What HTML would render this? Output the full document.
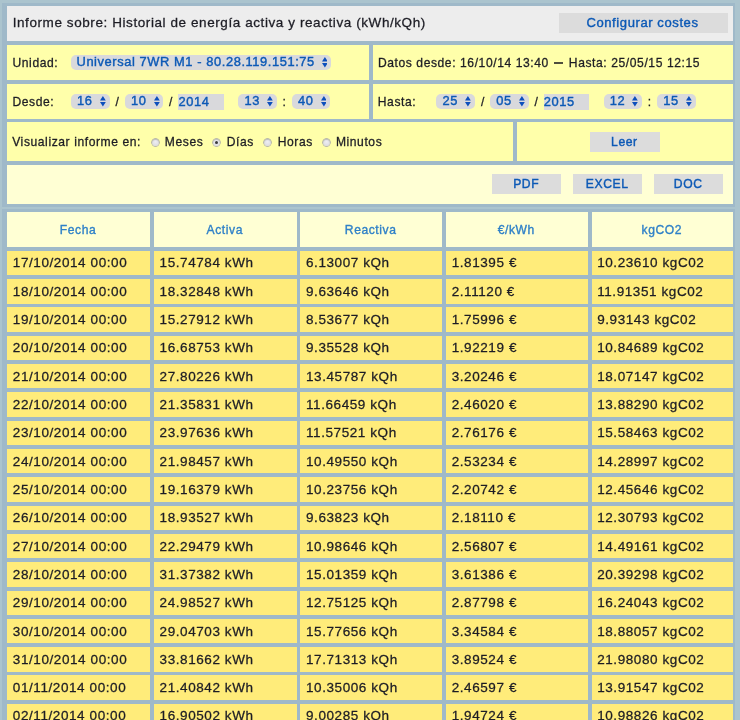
<!DOCTYPE html>
<html><head><meta charset="utf-8"><title>Informe</title>
<style>
html,body{margin:0;padding:0;}
body{width:740px;height:720px;overflow:hidden;position:relative;background:#abc4ce;font-family:"Liberation Sans",sans-serif;font-size:13px;letter-spacing:0.58px;color:#1d1d25;}
#w{position:absolute;left:0;top:0;width:740px;height:720px;overflow:hidden;will-change:transform;-webkit-text-stroke-width:0.28px;}
.b{position:absolute;}
.t{position:absolute;height:20px;line-height:20px;white-space:nowrap;}
.c{text-align:center;}
</style></head><body><div id="w">
<div class="b" style="left:2.20px;top:2.70px;width:733.10px;height:204.60px;background:#9fb9c9;"></div>
<div class="b" style="left:2.20px;top:208.70px;width:733.10px;height:511.30px;background:#9fb9c9;"></div>
<div class="b" style="left:7.15px;top:5.85px;width:726.05px;height:35.15px;background:#ededed;"></div>
<div class="t" style="left:12.70px;top:13.37px;font-size:13.5px;">Informe sobre: Historial de energía activa y reactiva (kWh/kQh)</div>
<div class="b" style="left:558.50px;top:12.80px;width:169.00px;height:19.80px;background:#dcdcdc;"></div>
<div class="t c" style="left:558.00px;width:169.00px;top:12.63px;font-size:13.05px;color:#0c59b6;-webkit-text-stroke-width:0.4px;">Configurar costes</div>
<div class="b" style="left:7.15px;top:44.75px;width:361.75px;height:35.20px;background:#ffffaa;"></div>
<div class="b" style="left:372.80px;top:44.75px;width:360.40px;height:35.20px;background:#ffffaa;"></div>
<div class="t" style="left:12.50px;top:53.46px;font-size:12.1px;">Unidad:</div>
<div class="b" style="left:71.00px;top:55.10px;width:260.40px;height:14.70px;background:#d9d9dc;border-radius:5px;"></div>
<div class="t" style="left:76.50px;top:51.89px;font-size:12.88px;color:#0c59b6;-webkit-text-stroke-width:0.4px;">Universal 7WR M1 - 80.28.119.151:75</div>
<svg class="b" style="left:321.60px;top:57.30px" width="5.8" height="10.4" viewBox="0 0 5.8 10.4"><path d="M2.9 0 L5.8 4.4 L0 4.4 Z M2.9 10.4 L5.8 6 L0 6 Z" fill="#0d4fbc"/></svg>
<div class="t" style="left:377.90px;top:53.46px;font-size:12.1px;">Datos desde: 16/10/14 13:40 <span style="display:inline-block;width:9px;height:1.4px;margin:0 1.8px 0 1.3px;vertical-align:3.9px;background:rgba(34,34,34,.8)"></span> Hasta: 25/05/15 12:15</div>
<div class="b" style="left:7.15px;top:83.90px;width:361.75px;height:35.05px;background:#ffffaa;"></div>
<div class="b" style="left:372.80px;top:83.90px;width:360.40px;height:35.05px;background:#ffffaa;"></div>
<div class="t" style="left:12.50px;top:92.16px;font-size:12.1px;">Desde:</div>
<div class="b" style="left:71.00px;top:94.00px;width:38.60px;height:14.80px;background:#d9d9dc;border-radius:5px;"></div>
<div class="t" style="left:77.10px;top:91.49px;font-size:12.88px;color:#0c59b6;-webkit-text-stroke-width:0.4px;">16</div>
<svg class="b" style="left:99.90px;top:96.35px" width="5.8" height="10.4" viewBox="0 0 5.8 10.4"><path d="M2.9 0 L5.8 4.4 L0 4.4 Z M2.9 10.4 L5.8 6 L0 6 Z" fill="#0d4fbc"/></svg>
<div class="t" style="left:115.60px;top:92.16px;font-size:12.1px;">/</div>
<div class="b" style="left:124.90px;top:94.00px;width:38.60px;height:14.80px;background:#d9d9dc;border-radius:5px;"></div>
<div class="t" style="left:131.00px;top:91.49px;font-size:12.88px;color:#0c59b6;-webkit-text-stroke-width:0.4px;">10</div>
<svg class="b" style="left:153.80px;top:96.35px" width="5.8" height="10.4" viewBox="0 0 5.8 10.4"><path d="M2.9 0 L5.8 4.4 L0 4.4 Z M2.9 10.4 L5.8 6 L0 6 Z" fill="#0d4fbc"/></svg>
<div class="t" style="left:169.10px;top:92.16px;font-size:12.1px;">/</div>
<div class="b" style="left:178.40px;top:94.00px;width:45.60px;height:15.70px;background:#d9d9dc;"></div>
<div class="t" style="left:178.50px;top:91.99px;font-size:12.88px;color:#0c59b6;-webkit-text-stroke-width:0.4px;">2014</div>
<div class="b" style="left:238.40px;top:94.00px;width:38.40px;height:14.80px;background:#d9d9dc;border-radius:5px;"></div>
<div class="t" style="left:244.50px;top:91.49px;font-size:12.88px;color:#0c59b6;-webkit-text-stroke-width:0.4px;">13</div>
<svg class="b" style="left:267.10px;top:96.35px" width="5.8" height="10.4" viewBox="0 0 5.8 10.4"><path d="M2.9 0 L5.8 4.4 L0 4.4 Z M2.9 10.4 L5.8 6 L0 6 Z" fill="#0d4fbc"/></svg>
<div class="t" style="left:282.50px;top:92.16px;font-size:12.1px;">:</div>
<div class="b" style="left:291.90px;top:94.00px;width:38.40px;height:14.80px;background:#d9d9dc;border-radius:5px;"></div>
<div class="t" style="left:298.00px;top:91.49px;font-size:12.88px;color:#0c59b6;-webkit-text-stroke-width:0.4px;">40</div>
<svg class="b" style="left:320.60px;top:96.35px" width="5.8" height="10.4" viewBox="0 0 5.8 10.4"><path d="M2.9 0 L5.8 4.4 L0 4.4 Z M2.9 10.4 L5.8 6 L0 6 Z" fill="#0d4fbc"/></svg>
<div class="t" style="left:377.80px;top:92.16px;font-size:12.1px;">Hasta:</div>
<div class="b" style="left:436.30px;top:94.00px;width:38.60px;height:14.80px;background:#d9d9dc;border-radius:5px;"></div>
<div class="t" style="left:442.40px;top:91.49px;font-size:12.88px;color:#0c59b6;-webkit-text-stroke-width:0.4px;">25</div>
<svg class="b" style="left:465.20px;top:96.35px" width="5.8" height="10.4" viewBox="0 0 5.8 10.4"><path d="M2.9 0 L5.8 4.4 L0 4.4 Z M2.9 10.4 L5.8 6 L0 6 Z" fill="#0d4fbc"/></svg>
<div class="t" style="left:480.90px;top:92.16px;font-size:12.1px;">/</div>
<div class="b" style="left:490.20px;top:94.00px;width:38.60px;height:14.80px;background:#d9d9dc;border-radius:5px;"></div>
<div class="t" style="left:496.30px;top:91.49px;font-size:12.88px;color:#0c59b6;-webkit-text-stroke-width:0.4px;">05</div>
<svg class="b" style="left:519.10px;top:96.35px" width="5.8" height="10.4" viewBox="0 0 5.8 10.4"><path d="M2.9 0 L5.8 4.4 L0 4.4 Z M2.9 10.4 L5.8 6 L0 6 Z" fill="#0d4fbc"/></svg>
<div class="t" style="left:534.40px;top:92.16px;font-size:12.1px;">/</div>
<div class="b" style="left:543.70px;top:94.00px;width:45.60px;height:15.70px;background:#d9d9dc;"></div>
<div class="t" style="left:543.80px;top:91.99px;font-size:12.88px;color:#0c59b6;-webkit-text-stroke-width:0.4px;">2015</div>
<div class="b" style="left:603.70px;top:94.00px;width:38.40px;height:14.80px;background:#d9d9dc;border-radius:5px;"></div>
<div class="t" style="left:609.80px;top:91.49px;font-size:12.88px;color:#0c59b6;-webkit-text-stroke-width:0.4px;">12</div>
<svg class="b" style="left:632.40px;top:96.35px" width="5.8" height="10.4" viewBox="0 0 5.8 10.4"><path d="M2.9 0 L5.8 4.4 L0 4.4 Z M2.9 10.4 L5.8 6 L0 6 Z" fill="#0d4fbc"/></svg>
<div class="t" style="left:647.80px;top:92.16px;font-size:12.1px;">:</div>
<div class="b" style="left:657.20px;top:94.00px;width:38.40px;height:14.80px;background:#d9d9dc;border-radius:5px;"></div>
<div class="t" style="left:663.30px;top:91.49px;font-size:12.88px;color:#0c59b6;-webkit-text-stroke-width:0.4px;">15</div>
<svg class="b" style="left:685.90px;top:96.35px" width="5.8" height="10.4" viewBox="0 0 5.8 10.4"><path d="M2.9 0 L5.8 4.4 L0 4.4 Z M2.9 10.4 L5.8 6 L0 6 Z" fill="#0d4fbc"/></svg>
<div class="b" style="left:7.15px;top:121.95px;width:506.10px;height:39.05px;background:#ffffaa;"></div>
<div class="b" style="left:517.15px;top:121.95px;width:216.05px;height:39.05px;background:#ffffaa;"></div>
<div class="t" style="left:12.20px;top:131.66px;font-size:12.1px;">Visualizar informe en:</div>
<div class="b" style="left:151.50px;top:138.90px;width:7px;height:7px;border-radius:50%;background:radial-gradient(circle at 50% 40%,#efeff2,#d6d6dc);box-shadow:0 0 0 0.7px #a2a2a8, inset 0 0.8px 1px rgba(0,0,0,.22);"></div>
<div class="t" style="left:164.80px;top:131.66px;font-size:12.1px;">Meses</div>
<div class="b" style="left:213.10px;top:138.90px;width:7px;height:7px;border-radius:50%;background:radial-gradient(circle at 50% 40%,#efeff2,#d6d6dc);box-shadow:0 0 0 0.7px #a2a2a8, inset 0 0.8px 1px rgba(0,0,0,.22);"></div>
<div class="b" style="left:215.00px;top:140.80px;width:3.2px;height:3.2px;border-radius:50%;background:#3a3a3a;"></div>
<div class="t" style="left:226.70px;top:131.66px;font-size:12.1px;">Días</div>
<div class="b" style="left:263.80px;top:138.90px;width:7px;height:7px;border-radius:50%;background:radial-gradient(circle at 50% 40%,#efeff2,#d6d6dc);box-shadow:0 0 0 0.7px #a2a2a8, inset 0 0.8px 1px rgba(0,0,0,.22);"></div>
<div class="t" style="left:277.70px;top:131.66px;font-size:12.1px;">Horas</div>
<div class="b" style="left:322.50px;top:138.90px;width:7px;height:7px;border-radius:50%;background:radial-gradient(circle at 50% 40%,#efeff2,#d6d6dc);box-shadow:0 0 0 0.7px #a2a2a8, inset 0 0.8px 1px rgba(0,0,0,.22);"></div>
<div class="t" style="left:335.90px;top:131.66px;font-size:12.1px;">Minutos</div>
<div class="b" style="left:590.00px;top:132.20px;width:69.80px;height:19.60px;background:#dcdcdc;"></div>
<div class="t c" style="left:589.50px;width:69.80px;top:132.04px;font-size:12.15px;color:#0c59b6;-webkit-text-stroke-width:0.4px;">Leer</div>
<div class="b" style="left:7.15px;top:164.90px;width:726.05px;height:39.05px;background:#ffffd4;"></div>
<div class="b" style="left:492.20px;top:174.00px;width:69.00px;height:19.80px;background:#dcdcdc;"></div>
<div class="t c" style="left:491.70px;width:69.00px;top:174.34px;font-size:12.15px;color:#0c59b6;-webkit-text-stroke-width:0.4px;">PDF</div>
<div class="b" style="left:573.10px;top:174.00px;width:69.10px;height:19.80px;background:#dcdcdc;"></div>
<div class="t c" style="left:572.60px;width:69.10px;top:174.34px;font-size:12.15px;color:#0c59b6;-webkit-text-stroke-width:0.4px;">EXCEL</div>
<div class="b" style="left:654.10px;top:174.00px;width:69.10px;height:19.80px;background:#dcdcdc;"></div>
<div class="t c" style="left:653.60px;width:69.10px;top:174.34px;font-size:12.15px;color:#0c59b6;-webkit-text-stroke-width:0.4px;">DOC</div>
<div class="b" style="left:7.15px;top:211.70px;width:142.80px;height:35.10px;background:#ffffd4;"></div>
<div class="t c" style="left:6.65px;width:142.80px;top:220.16px;font-size:12.1px;color:#2f80c8;-webkit-text-stroke-width:0.35px;">Fecha</div>
<div class="b" style="left:153.90px;top:211.70px;width:142.80px;height:35.10px;background:#ffffd4;"></div>
<div class="t c" style="left:153.40px;width:142.80px;top:220.16px;font-size:12.1px;color:#2f80c8;-webkit-text-stroke-width:0.35px;">Activa</div>
<div class="b" style="left:300.30px;top:211.70px;width:141.75px;height:35.10px;background:#ffffd4;"></div>
<div class="t c" style="left:299.80px;width:141.75px;top:220.16px;font-size:12.1px;color:#2f80c8;-webkit-text-stroke-width:0.35px;">Reactiva</div>
<div class="b" style="left:446.00px;top:211.70px;width:141.60px;height:35.10px;background:#ffffd4;"></div>
<div class="t c" style="left:445.50px;width:141.60px;top:220.16px;font-size:12.1px;color:#2f80c8;-webkit-text-stroke-width:0.35px;">€/kWh</div>
<div class="b" style="left:591.50px;top:211.70px;width:141.70px;height:35.10px;background:#ffffd4;"></div>
<div class="t c" style="left:591.00px;width:141.70px;top:220.16px;font-size:12.1px;color:#2f80c8;-webkit-text-stroke-width:0.35px;">kgCO2</div>
<div class="b" style="left:7.15px;top:250.80px;width:142.80px;height:24.40px;background:#ffec7a;"></div>
<div class="t" style="left:12.85px;top:253.47px;font-size:13.5px;">17/10/2014 00:00</div>
<div class="b" style="left:153.90px;top:250.80px;width:142.80px;height:24.40px;background:#ffec7a;"></div>
<div class="t" style="left:159.60px;top:253.47px;font-size:13.5px;">15.74784 kWh</div>
<div class="b" style="left:300.30px;top:250.80px;width:141.75px;height:24.40px;background:#ffec7a;"></div>
<div class="t" style="left:306.00px;top:253.47px;font-size:13.5px;">6.13007 kQh</div>
<div class="b" style="left:446.00px;top:250.80px;width:141.60px;height:24.40px;background:#ffec7a;"></div>
<div class="t" style="left:451.70px;top:253.47px;font-size:13.5px;">1.81395 €</div>
<div class="b" style="left:591.50px;top:250.80px;width:141.70px;height:24.40px;background:#ffec7a;"></div>
<div class="t" style="left:597.20px;top:253.47px;font-size:13.5px;">10.23610 kgC02</div>
<div class="b" style="left:7.15px;top:279.11px;width:142.80px;height:24.40px;background:#ffec7a;"></div>
<div class="t" style="left:12.85px;top:281.78px;font-size:13.5px;">18/10/2014 00:00</div>
<div class="b" style="left:153.90px;top:279.11px;width:142.80px;height:24.40px;background:#ffec7a;"></div>
<div class="t" style="left:159.60px;top:281.78px;font-size:13.5px;">18.32848 kWh</div>
<div class="b" style="left:300.30px;top:279.11px;width:141.75px;height:24.40px;background:#ffec7a;"></div>
<div class="t" style="left:306.00px;top:281.78px;font-size:13.5px;">9.63646 kQh</div>
<div class="b" style="left:446.00px;top:279.11px;width:141.60px;height:24.40px;background:#ffec7a;"></div>
<div class="t" style="left:451.70px;top:281.78px;font-size:13.5px;">2.11120 €</div>
<div class="b" style="left:591.50px;top:279.11px;width:141.70px;height:24.40px;background:#ffec7a;"></div>
<div class="t" style="left:597.20px;top:281.78px;font-size:13.5px;">11.91351 kgC02</div>
<div class="b" style="left:7.15px;top:307.42px;width:142.80px;height:24.40px;background:#ffec7a;"></div>
<div class="t" style="left:12.85px;top:310.09px;font-size:13.5px;">19/10/2014 00:00</div>
<div class="b" style="left:153.90px;top:307.42px;width:142.80px;height:24.40px;background:#ffec7a;"></div>
<div class="t" style="left:159.60px;top:310.09px;font-size:13.5px;">15.27912 kWh</div>
<div class="b" style="left:300.30px;top:307.42px;width:141.75px;height:24.40px;background:#ffec7a;"></div>
<div class="t" style="left:306.00px;top:310.09px;font-size:13.5px;">8.53677 kQh</div>
<div class="b" style="left:446.00px;top:307.42px;width:141.60px;height:24.40px;background:#ffec7a;"></div>
<div class="t" style="left:451.70px;top:310.09px;font-size:13.5px;">1.75996 €</div>
<div class="b" style="left:591.50px;top:307.42px;width:141.70px;height:24.40px;background:#ffec7a;"></div>
<div class="t" style="left:597.20px;top:310.09px;font-size:13.5px;">9.93143 kgC02</div>
<div class="b" style="left:7.15px;top:335.73px;width:142.80px;height:24.40px;background:#ffec7a;"></div>
<div class="t" style="left:12.85px;top:338.40px;font-size:13.5px;">20/10/2014 00:00</div>
<div class="b" style="left:153.90px;top:335.73px;width:142.80px;height:24.40px;background:#ffec7a;"></div>
<div class="t" style="left:159.60px;top:338.40px;font-size:13.5px;">16.68753 kWh</div>
<div class="b" style="left:300.30px;top:335.73px;width:141.75px;height:24.40px;background:#ffec7a;"></div>
<div class="t" style="left:306.00px;top:338.40px;font-size:13.5px;">9.35528 kQh</div>
<div class="b" style="left:446.00px;top:335.73px;width:141.60px;height:24.40px;background:#ffec7a;"></div>
<div class="t" style="left:451.70px;top:338.40px;font-size:13.5px;">1.92219 €</div>
<div class="b" style="left:591.50px;top:335.73px;width:141.70px;height:24.40px;background:#ffec7a;"></div>
<div class="t" style="left:597.20px;top:338.40px;font-size:13.5px;">10.84689 kgC02</div>
<div class="b" style="left:7.15px;top:364.04px;width:142.80px;height:24.40px;background:#ffec7a;"></div>
<div class="t" style="left:12.85px;top:366.71px;font-size:13.5px;">21/10/2014 00:00</div>
<div class="b" style="left:153.90px;top:364.04px;width:142.80px;height:24.40px;background:#ffec7a;"></div>
<div class="t" style="left:159.60px;top:366.71px;font-size:13.5px;">27.80226 kWh</div>
<div class="b" style="left:300.30px;top:364.04px;width:141.75px;height:24.40px;background:#ffec7a;"></div>
<div class="t" style="left:306.00px;top:366.71px;font-size:13.5px;">13.45787 kQh</div>
<div class="b" style="left:446.00px;top:364.04px;width:141.60px;height:24.40px;background:#ffec7a;"></div>
<div class="t" style="left:451.70px;top:366.71px;font-size:13.5px;">3.20246 €</div>
<div class="b" style="left:591.50px;top:364.04px;width:141.70px;height:24.40px;background:#ffec7a;"></div>
<div class="t" style="left:597.20px;top:366.71px;font-size:13.5px;">18.07147 kgC02</div>
<div class="b" style="left:7.15px;top:392.35px;width:142.80px;height:24.40px;background:#ffec7a;"></div>
<div class="t" style="left:12.85px;top:395.02px;font-size:13.5px;">22/10/2014 00:00</div>
<div class="b" style="left:153.90px;top:392.35px;width:142.80px;height:24.40px;background:#ffec7a;"></div>
<div class="t" style="left:159.60px;top:395.02px;font-size:13.5px;">21.35831 kWh</div>
<div class="b" style="left:300.30px;top:392.35px;width:141.75px;height:24.40px;background:#ffec7a;"></div>
<div class="t" style="left:306.00px;top:395.02px;font-size:13.5px;">11.66459 kQh</div>
<div class="b" style="left:446.00px;top:392.35px;width:141.60px;height:24.40px;background:#ffec7a;"></div>
<div class="t" style="left:451.70px;top:395.02px;font-size:13.5px;">2.46020 €</div>
<div class="b" style="left:591.50px;top:392.35px;width:141.70px;height:24.40px;background:#ffec7a;"></div>
<div class="t" style="left:597.20px;top:395.02px;font-size:13.5px;">13.88290 kgC02</div>
<div class="b" style="left:7.15px;top:420.66px;width:142.80px;height:24.40px;background:#ffec7a;"></div>
<div class="t" style="left:12.85px;top:423.33px;font-size:13.5px;">23/10/2014 00:00</div>
<div class="b" style="left:153.90px;top:420.66px;width:142.80px;height:24.40px;background:#ffec7a;"></div>
<div class="t" style="left:159.60px;top:423.33px;font-size:13.5px;">23.97636 kWh</div>
<div class="b" style="left:300.30px;top:420.66px;width:141.75px;height:24.40px;background:#ffec7a;"></div>
<div class="t" style="left:306.00px;top:423.33px;font-size:13.5px;">11.57521 kQh</div>
<div class="b" style="left:446.00px;top:420.66px;width:141.60px;height:24.40px;background:#ffec7a;"></div>
<div class="t" style="left:451.70px;top:423.33px;font-size:13.5px;">2.76176 €</div>
<div class="b" style="left:591.50px;top:420.66px;width:141.70px;height:24.40px;background:#ffec7a;"></div>
<div class="t" style="left:597.20px;top:423.33px;font-size:13.5px;">15.58463 kgC02</div>
<div class="b" style="left:7.15px;top:448.97px;width:142.80px;height:24.40px;background:#ffec7a;"></div>
<div class="t" style="left:12.85px;top:451.64px;font-size:13.5px;">24/10/2014 00:00</div>
<div class="b" style="left:153.90px;top:448.97px;width:142.80px;height:24.40px;background:#ffec7a;"></div>
<div class="t" style="left:159.60px;top:451.64px;font-size:13.5px;">21.98457 kWh</div>
<div class="b" style="left:300.30px;top:448.97px;width:141.75px;height:24.40px;background:#ffec7a;"></div>
<div class="t" style="left:306.00px;top:451.64px;font-size:13.5px;">10.49550 kQh</div>
<div class="b" style="left:446.00px;top:448.97px;width:141.60px;height:24.40px;background:#ffec7a;"></div>
<div class="t" style="left:451.70px;top:451.64px;font-size:13.5px;">2.53234 €</div>
<div class="b" style="left:591.50px;top:448.97px;width:141.70px;height:24.40px;background:#ffec7a;"></div>
<div class="t" style="left:597.20px;top:451.64px;font-size:13.5px;">14.28997 kgC02</div>
<div class="b" style="left:7.15px;top:477.28px;width:142.80px;height:24.40px;background:#ffec7a;"></div>
<div class="t" style="left:12.85px;top:479.95px;font-size:13.5px;">25/10/2014 00:00</div>
<div class="b" style="left:153.90px;top:477.28px;width:142.80px;height:24.40px;background:#ffec7a;"></div>
<div class="t" style="left:159.60px;top:479.95px;font-size:13.5px;">19.16379 kWh</div>
<div class="b" style="left:300.30px;top:477.28px;width:141.75px;height:24.40px;background:#ffec7a;"></div>
<div class="t" style="left:306.00px;top:479.95px;font-size:13.5px;">10.23756 kQh</div>
<div class="b" style="left:446.00px;top:477.28px;width:141.60px;height:24.40px;background:#ffec7a;"></div>
<div class="t" style="left:451.70px;top:479.95px;font-size:13.5px;">2.20742 €</div>
<div class="b" style="left:591.50px;top:477.28px;width:141.70px;height:24.40px;background:#ffec7a;"></div>
<div class="t" style="left:597.20px;top:479.95px;font-size:13.5px;">12.45646 kgC02</div>
<div class="b" style="left:7.15px;top:505.59px;width:142.80px;height:24.40px;background:#ffec7a;"></div>
<div class="t" style="left:12.85px;top:508.26px;font-size:13.5px;">26/10/2014 00:00</div>
<div class="b" style="left:153.90px;top:505.59px;width:142.80px;height:24.40px;background:#ffec7a;"></div>
<div class="t" style="left:159.60px;top:508.26px;font-size:13.5px;">18.93527 kWh</div>
<div class="b" style="left:300.30px;top:505.59px;width:141.75px;height:24.40px;background:#ffec7a;"></div>
<div class="t" style="left:306.00px;top:508.26px;font-size:13.5px;">9.63823 kQh</div>
<div class="b" style="left:446.00px;top:505.59px;width:141.60px;height:24.40px;background:#ffec7a;"></div>
<div class="t" style="left:451.70px;top:508.26px;font-size:13.5px;">2.18110 €</div>
<div class="b" style="left:591.50px;top:505.59px;width:141.70px;height:24.40px;background:#ffec7a;"></div>
<div class="t" style="left:597.20px;top:508.26px;font-size:13.5px;">12.30793 kgC02</div>
<div class="b" style="left:7.15px;top:533.90px;width:142.80px;height:24.40px;background:#ffec7a;"></div>
<div class="t" style="left:12.85px;top:536.57px;font-size:13.5px;">27/10/2014 00:00</div>
<div class="b" style="left:153.90px;top:533.90px;width:142.80px;height:24.40px;background:#ffec7a;"></div>
<div class="t" style="left:159.60px;top:536.57px;font-size:13.5px;">22.29479 kWh</div>
<div class="b" style="left:300.30px;top:533.90px;width:141.75px;height:24.40px;background:#ffec7a;"></div>
<div class="t" style="left:306.00px;top:536.57px;font-size:13.5px;">10.98646 kQh</div>
<div class="b" style="left:446.00px;top:533.90px;width:141.60px;height:24.40px;background:#ffec7a;"></div>
<div class="t" style="left:451.70px;top:536.57px;font-size:13.5px;">2.56807 €</div>
<div class="b" style="left:591.50px;top:533.90px;width:141.70px;height:24.40px;background:#ffec7a;"></div>
<div class="t" style="left:597.20px;top:536.57px;font-size:13.5px;">14.49161 kgC02</div>
<div class="b" style="left:7.15px;top:562.21px;width:142.80px;height:24.40px;background:#ffec7a;"></div>
<div class="t" style="left:12.85px;top:564.88px;font-size:13.5px;">28/10/2014 00:00</div>
<div class="b" style="left:153.90px;top:562.21px;width:142.80px;height:24.40px;background:#ffec7a;"></div>
<div class="t" style="left:159.60px;top:564.88px;font-size:13.5px;">31.37382 kWh</div>
<div class="b" style="left:300.30px;top:562.21px;width:141.75px;height:24.40px;background:#ffec7a;"></div>
<div class="t" style="left:306.00px;top:564.88px;font-size:13.5px;">15.01359 kQh</div>
<div class="b" style="left:446.00px;top:562.21px;width:141.60px;height:24.40px;background:#ffec7a;"></div>
<div class="t" style="left:451.70px;top:564.88px;font-size:13.5px;">3.61386 €</div>
<div class="b" style="left:591.50px;top:562.21px;width:141.70px;height:24.40px;background:#ffec7a;"></div>
<div class="t" style="left:597.20px;top:564.88px;font-size:13.5px;">20.39298 kgC02</div>
<div class="b" style="left:7.15px;top:590.52px;width:142.80px;height:24.40px;background:#ffec7a;"></div>
<div class="t" style="left:12.85px;top:593.19px;font-size:13.5px;">29/10/2014 00:00</div>
<div class="b" style="left:153.90px;top:590.52px;width:142.80px;height:24.40px;background:#ffec7a;"></div>
<div class="t" style="left:159.60px;top:593.19px;font-size:13.5px;">24.98527 kWh</div>
<div class="b" style="left:300.30px;top:590.52px;width:141.75px;height:24.40px;background:#ffec7a;"></div>
<div class="t" style="left:306.00px;top:593.19px;font-size:13.5px;">12.75125 kQh</div>
<div class="b" style="left:446.00px;top:590.52px;width:141.60px;height:24.40px;background:#ffec7a;"></div>
<div class="t" style="left:451.70px;top:593.19px;font-size:13.5px;">2.87798 €</div>
<div class="b" style="left:591.50px;top:590.52px;width:141.70px;height:24.40px;background:#ffec7a;"></div>
<div class="t" style="left:597.20px;top:593.19px;font-size:13.5px;">16.24043 kgC02</div>
<div class="b" style="left:7.15px;top:618.83px;width:142.80px;height:24.40px;background:#ffec7a;"></div>
<div class="t" style="left:12.85px;top:621.50px;font-size:13.5px;">30/10/2014 00:00</div>
<div class="b" style="left:153.90px;top:618.83px;width:142.80px;height:24.40px;background:#ffec7a;"></div>
<div class="t" style="left:159.60px;top:621.50px;font-size:13.5px;">29.04703 kWh</div>
<div class="b" style="left:300.30px;top:618.83px;width:141.75px;height:24.40px;background:#ffec7a;"></div>
<div class="t" style="left:306.00px;top:621.50px;font-size:13.5px;">15.77656 kQh</div>
<div class="b" style="left:446.00px;top:618.83px;width:141.60px;height:24.40px;background:#ffec7a;"></div>
<div class="t" style="left:451.70px;top:621.50px;font-size:13.5px;">3.34584 €</div>
<div class="b" style="left:591.50px;top:618.83px;width:141.70px;height:24.40px;background:#ffec7a;"></div>
<div class="t" style="left:597.20px;top:621.50px;font-size:13.5px;">18.88057 kgC02</div>
<div class="b" style="left:7.15px;top:647.14px;width:142.80px;height:24.40px;background:#ffec7a;"></div>
<div class="t" style="left:12.85px;top:649.81px;font-size:13.5px;">31/10/2014 00:00</div>
<div class="b" style="left:153.90px;top:647.14px;width:142.80px;height:24.40px;background:#ffec7a;"></div>
<div class="t" style="left:159.60px;top:649.81px;font-size:13.5px;">33.81662 kWh</div>
<div class="b" style="left:300.30px;top:647.14px;width:141.75px;height:24.40px;background:#ffec7a;"></div>
<div class="t" style="left:306.00px;top:649.81px;font-size:13.5px;">17.71313 kQh</div>
<div class="b" style="left:446.00px;top:647.14px;width:141.60px;height:24.40px;background:#ffec7a;"></div>
<div class="t" style="left:451.70px;top:649.81px;font-size:13.5px;">3.89524 €</div>
<div class="b" style="left:591.50px;top:647.14px;width:141.70px;height:24.40px;background:#ffec7a;"></div>
<div class="t" style="left:597.20px;top:649.81px;font-size:13.5px;">21.98080 kgC02</div>
<div class="b" style="left:7.15px;top:675.45px;width:142.80px;height:24.40px;background:#ffec7a;"></div>
<div class="t" style="left:12.85px;top:678.12px;font-size:13.5px;">01/11/2014 00:00</div>
<div class="b" style="left:153.90px;top:675.45px;width:142.80px;height:24.40px;background:#ffec7a;"></div>
<div class="t" style="left:159.60px;top:678.12px;font-size:13.5px;">21.40842 kWh</div>
<div class="b" style="left:300.30px;top:675.45px;width:141.75px;height:24.40px;background:#ffec7a;"></div>
<div class="t" style="left:306.00px;top:678.12px;font-size:13.5px;">10.35006 kQh</div>
<div class="b" style="left:446.00px;top:675.45px;width:141.60px;height:24.40px;background:#ffec7a;"></div>
<div class="t" style="left:451.70px;top:678.12px;font-size:13.5px;">2.46597 €</div>
<div class="b" style="left:591.50px;top:675.45px;width:141.70px;height:24.40px;background:#ffec7a;"></div>
<div class="t" style="left:597.20px;top:678.12px;font-size:13.5px;">13.91547 kgC02</div>
<div class="b" style="left:7.15px;top:703.76px;width:142.80px;height:24.40px;background:#ffec7a;"></div>
<div class="t" style="left:12.85px;top:706.43px;font-size:13.5px;">02/11/2014 00:00</div>
<div class="b" style="left:153.90px;top:703.76px;width:142.80px;height:24.40px;background:#ffec7a;"></div>
<div class="t" style="left:159.60px;top:706.43px;font-size:13.5px;">16.90502 kWh</div>
<div class="b" style="left:300.30px;top:703.76px;width:141.75px;height:24.40px;background:#ffec7a;"></div>
<div class="t" style="left:306.00px;top:706.43px;font-size:13.5px;">9.00285 kQh</div>
<div class="b" style="left:446.00px;top:703.76px;width:141.60px;height:24.40px;background:#ffec7a;"></div>
<div class="t" style="left:451.70px;top:706.43px;font-size:13.5px;">1.94724 €</div>
<div class="b" style="left:591.50px;top:703.76px;width:141.70px;height:24.40px;background:#ffec7a;"></div>
<div class="t" style="left:597.20px;top:706.43px;font-size:13.5px;">10.98826 kgC02</div>
</div></body></html>
